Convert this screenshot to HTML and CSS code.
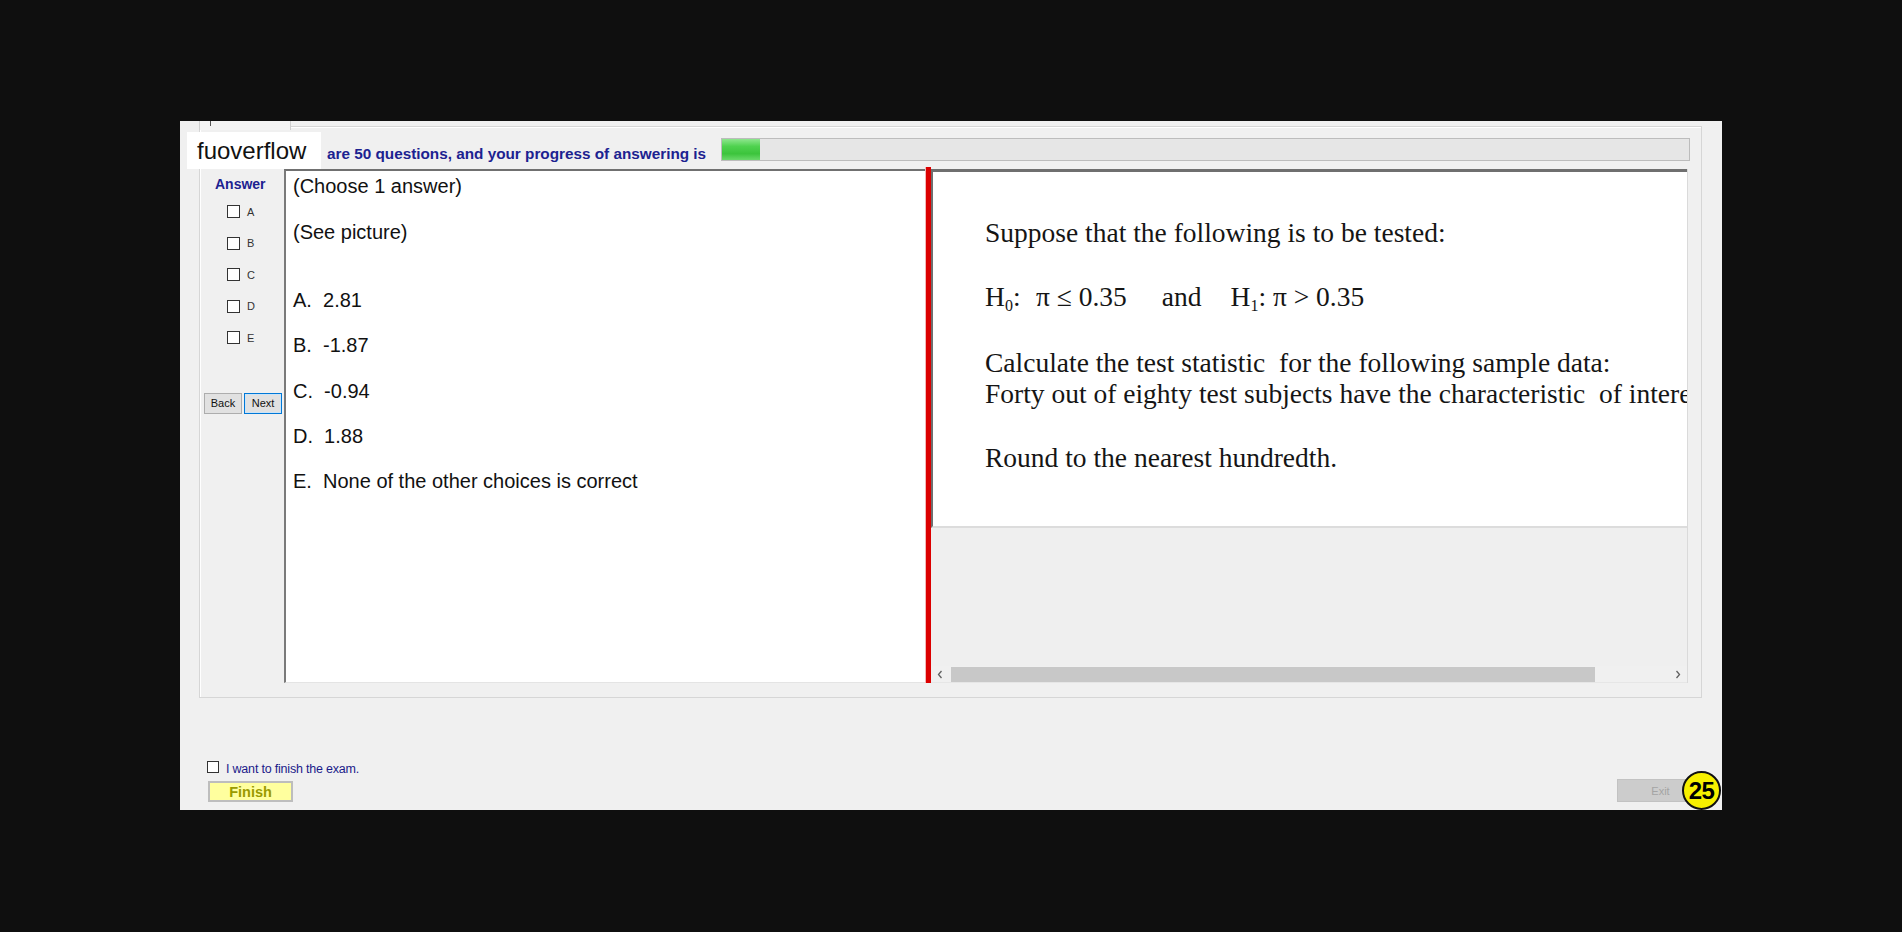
FILE: index.html
```html
<!DOCTYPE html>
<html lang="en">
<head>
<meta charset="utf-8">
<title>Exam</title>
<link rel="stylesheet" href="styles.css">
</head>
<body>
<div class="window">
  <div class="tabstrip"><div class="tab"><span class="tab-tick"></span></div></div>
  <div class="groupbox">
    <div class="header">
      <div class="header-text">are 50 questions, and your progress of answering is</div>
      <div class="progress"><div class="progress-fill" style="width:38px"></div></div>
    </div>
    <div class="main">
      <div class="answer-col">
        <div class="answer-title">Answer</div>
        <div class="choices">
          <div class="choice"><span class="cb"></span><span class="choice-label">A</span></div>
          <div class="choice"><span class="cb"></span><span class="choice-label">B</span></div>
          <div class="choice"><span class="cb"></span><span class="choice-label">C</span></div>
          <div class="choice"><span class="cb"></span><span class="choice-label">D</span></div>
          <div class="choice"><span class="cb"></span><span class="choice-label">E</span></div>
        </div>
        <div class="nav">
          <button class="btn">Back</button>
          <button class="btn btn-focus">Next</button>
        </div>
      </div>
      <div class="question">
        <p class="q-line q-first">(Choose 1 answer)</p>
        <p class="q-line q-see">(See picture)</p>
        <p class="q-line">A.&nbsp; 2.81</p>
        <p class="q-line">B.&nbsp; -1.87</p>
        <p class="q-line">C.&nbsp; -0.94</p>
        <p class="q-line">D.&nbsp; 1.88</p>
        <p class="q-line">E.&nbsp; None of the other choices is correct</p>
      </div>
      <div class="splitter"></div>
      <div class="viewer">
        <div class="viewport">
          <div class="picture">
            <p class="pic-l1">Suppose that the following is to be tested:</p>
            <p class="pic-l2"><span class="h-seg">H<sub>0</sub>:</span>π ≤ 0.35<span class="and">and</span><span class="h1">H<sub>1</sub>: π &gt; 0.35</span></p>
            <p class="pic-l3">Calculate the test statistic&nbsp; for the following sample data:</p>
            <p class="pic-l4">Forty out of eighty test subjects have the characteristic&nbsp; of interest.</p>
            <p class="pic-l5">Round to the nearest hundredth.</p>
          </div>
        </div>
        <div class="hscroll">
          <span class="arrow">
            <svg width="6" height="9" viewBox="0 0 6 9"><path d="M4.5 1 L1.5 4.5 L4.5 8" fill="none" stroke="#606060" stroke-width="1.3"/></svg>
          </span>
          <div class="track"><div class="thumb"></div></div>
          <span class="arrow">
            <svg width="6" height="9" viewBox="0 0 6 9"><path d="M1.5 1 L4.5 4.5 L1.5 8" fill="none" stroke="#606060" stroke-width="1.3"/></svg>
          </span>
        </div>
      </div>
    </div>
  </div>
  <div class="footer">
    <div class="finish-block">
      <div class="finish-check"><span class="cb cb-sm"></span><span class="finish-text">I want to finish the exam.</span></div>
      <button class="finish-btn">Finish</button>
    </div>
    <button class="exit-btn" disabled>Exit</button>
  </div>
  <div class="watermark">fuoverflow</div>
  <div class="badge">25</div>
</div>
</body>
</html>
```

FILE: styles.css
```css
* { box-sizing: border-box; }

html, body {
  margin: 0;
  padding: 0;
  background: #0f0f0f;
}

body {
  font-family: "Liberation Sans", Arial, sans-serif;
  padding-top: 121px;
  padding-left: 180px;
}

p { margin: 0; }

.window {
  position: relative;
  width: 1542px;
  height: 689px;
  background: #f0f0f0;
  display: flex;
  flex-direction: column;
}

/* clipped tab header */
.tabstrip {
  height: 5px;
  display: flex;
}
.tab {
  position: relative;
  z-index: 1;
  margin-left: 19px;
  width: 92px;
  height: 9px;
  background: #f4f4f4;
  border-left: 1px solid #cfcfcf;
  border-right: 1px solid #cfcfcf;
}
.tab-tick {
  display: block;
  margin-left: 10px;
  width: 1px;
  height: 5px;
  background: #555;
}

/* group box */
.groupbox {
  margin-left: 19px;
  width: 1503px;
  height: 572px;
  border: 1px solid #d6d6d6;
  box-shadow: inset 1px 1px 0 #fff;
  display: flex;
  flex-direction: column;
}

.header {
  height: 42px;
  display: flex;
}
.header-text {
  width: 521px;
  padding-left: 127px;
  white-space: nowrap;
  overflow: hidden;
  margin-top: 18px;
  font-size: 15.3px;
  line-height: 18px;
  font-weight: bold;
  color: #1c2290;
}
.progress {
  margin-top: 11px;
  width: 969px;
  height: 23px;
  background: #e6e6e6;
  border: 1px solid #bcbcbc;
  display: flex;
}
.progress-fill {
  height: 100%;
  background: linear-gradient(to bottom, #8ee68e 0%, #4fd24f 35%, #3cc43c 70%, #6bd96b 100%);
}

.main {
  height: 514px;
  display: flex;
}

/* answer column */
.answer-col {
  width: 84px;
  display: flex;
  flex-direction: column;
}
.answer-title {
  margin-top: 7px;
  padding-left: 15px;
  font-size: 14px;
  line-height: 16px;
  font-weight: bold;
  color: #1c2290;
}
.choices {
  margin-top: 4px;
  display: flex;
  flex-direction: column;
}
.choice {
  height: 31.5px;
  display: flex;
  align-items: center;
}
.cb {
  display: inline-block;
  width: 13px;
  height: 13px;
  background: #fff;
  border: 1px solid #333;
}
.choice .cb { margin-left: 27px; }
.choice-label {
  margin-left: 7px;
  font-size: 11px;
  color: #333;
}
.nav {
  margin-top: 39px;
  display: flex;
  padding-left: 4px;
  gap: 2px;
}
.btn {
  width: 38px;
  height: 21px;
  padding: 0;
  font-family: "Liberation Sans", Arial, sans-serif;
  font-size: 11px;
  color: #111;
  background: #e1e1e1;
  border: 1px solid #adadad;
}
.btn-focus {
  border: 1px solid #0078d7;
  box-shadow: inset 0 0 0 1px #cce4f7;
}

/* question pane */
.question {
  width: 642px;
  background: #fff;
  border-top: 2px solid #707070;
  border-left: 2px solid #7a7a7a;
  border-bottom: 1px solid #e4e4e4;
  padding: 3px 0 0 7px;
  font-size: 20px;
  line-height: 24px;
  color: #111;
  white-space: nowrap;
}
.q-line { margin-bottom: 21.3px; }
.q-first { margin-bottom: 22px; }
.q-see { margin-bottom: 44px; }

.splitter {
  width: 5px;
  margin-top: -2px;
  background: #dc0000;
  box-shadow: -1px 0 0 #f2b8b8;
}

/* picture viewer */
.viewer {
  width: 757px;
  display: flex;
  flex-direction: column;
  border-right: 1px solid #dadada;
}
.viewport {
  flex: 1;
  overflow: hidden;
  background: #efefef;
}
.picture {
  width: 1000px;
  height: 359px;
  background: #fff;
  border-top: 3px solid #6f6f6f;
  border-left: 2px solid #6f6f6f;
  border-bottom: 2px solid #dcdcdc;
  padding: 45px 0 0 52px;
  font-family: "Liberation Serif", "Times New Roman", serif;
  font-size: 27.5px;
  line-height: 32px;
  color: #151515;
  white-space: nowrap;
}
.pic-l1 { margin-bottom: 32px; }
.pic-l2 { margin-bottom: 34px; }
.pic-l3 { margin-bottom: -1px; }
.pic-l4 { margin-bottom: 32px; }
.picture sub {
  font-size: 16px;
  line-height: 0;
  vertical-align: -5px;
}
.h-seg {
  display: inline-block;
  width: 51px;
}
.and {
  display: inline-block;
  margin-left: 35px;
}
.h1 {
  display: inline-block;
  margin-left: 29px;
}

.hscroll {
  height: 17px;
  display: flex;
  align-items: center;
  background: #f0f0f0;
  border-bottom: 1px solid #e6e6e6;
}
.arrow {
  width: 18px;
  height: 16px;
  display: flex;
  align-items: center;
  justify-content: center;
}
.track {
  flex: 1;
  height: 15px;
  display: flex;
}
.thumb {
  margin-left: 2px;
  width: 644px;
  height: 15px;
  background: #c8c8c8;
}

/* footer */
.footer {
  flex: 1;
  display: flex;
  align-items: flex-end;
  justify-content: space-between;
  padding: 0 20px 8px 27px;
}
.finish-block {
  display: flex;
  flex-direction: column;
}
.finish-check {
  height: 13px;
  display: flex;
  align-items: center;
  gap: 7px;
}
.cb-sm {
  width: 12px;
  height: 12px;
}
.finish-text {
  margin-top: 4px;
  font-size: 12.5px;
  letter-spacing: -0.2px;
  color: #1b1b8a;
}
.finish-btn {
  margin-top: 8px;
  margin-left: 1px;
  width: 85px;
  height: 21px;
  padding: 0;
  background: #ffff9e;
  border: 2px solid #bdbdbd;
  font-family: "Liberation Sans", Arial, sans-serif;
  font-size: 14.5px;
  font-weight: bold;
  color: #9a9a00;
}
.exit-btn {
  width: 85px;
  height: 23px;
  padding: 0 0 0 2px;
  margin-bottom: 0;
  background: #cccccc;
  border: 1px solid #c2c2c2;
  font-family: "Liberation Sans", Arial, sans-serif;
  font-size: 11px;
  color: #a4a4a4;
}

/* overlays */
.watermark {
  position: absolute;
  left: 7px;
  top: 11px;
  width: 134px;
  height: 37px;
  background: #fff;
  padding-left: 10px;
  font-size: 24px;
  line-height: 37px;
  color: #111;
}
.badge {
  position: absolute;
  right: 1px;
  bottom: 0;
  width: 39px;
  height: 39px;
  border-radius: 50%;
  background: #f7f000;
  border: 2px solid #111;
  display: flex;
  align-items: center;
  justify-content: center;
  font-size: 24px;
  font-weight: bold;
  letter-spacing: -0.5px;
  color: #000;
}
```
